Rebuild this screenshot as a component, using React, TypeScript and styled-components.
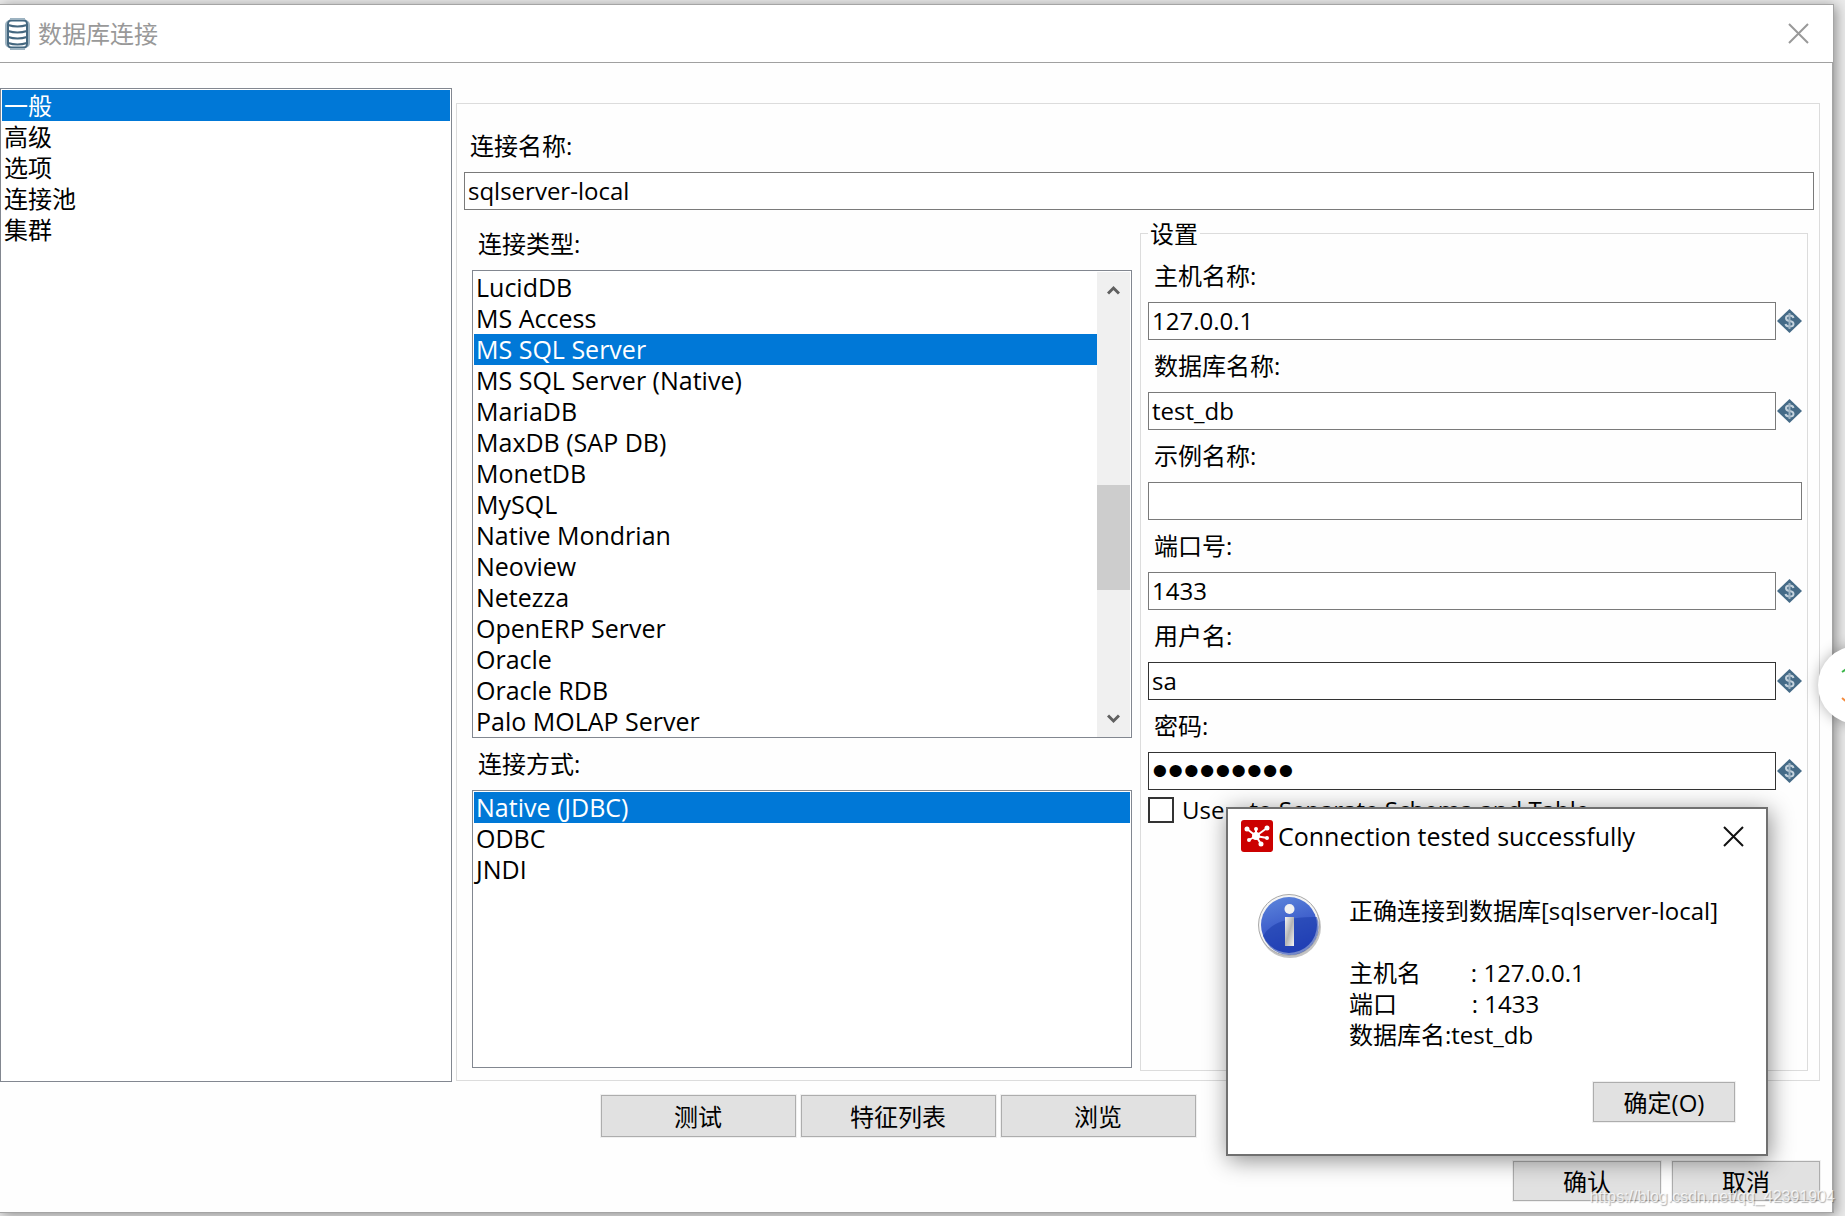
import React, { useState } from "react";
import styled, { createGlobalStyle, css } from "styled-components";

const GlobalStyle = createGlobalStyle`
  * { box-sizing: border-box; }
  body {
    margin: 0;
    background: #ebebeb;
    color: #000;
    font: 24px/31px "Open Sans", "Noto Sans CJK SC", sans-serif;
  }
  button, input { font: inherit; color: inherit; }
`;

const Desktop = styled.div`
  position: relative;
  display: flex;
  min-height: 100vh;
  padding: 4px 11px 3px 0;
  overflow: hidden;
`;

const Window = styled.main`
  flex: 1;
  display: flex;
  flex-direction: column;
  border: 1px solid #a5a5a5;
  border-left: 0;
  background: #fefefe;
  box-shadow: 2px 2px 12px rgba(0, 0, 0, 0.4);
`;

const TitleBar = styled.header`
  display: flex;
  align-items: center;
  height: 58px;
  padding: 0 24px 0 5px;
  border-bottom: 1px solid #a0a0a0;
  background: #fff;
  color: #999;
`;

const WindowTitle = styled.h1`
  flex: 1;
  margin: 0 0 0 8px;
  font: inherit;
`;

const CloseButton = styled.button`
  display: flex;
  padding: 0;
  border: 0;
  background: none;
`;

const Content = styled.div`
  flex: 1;
  display: flex;
  flex-direction: column;
  padding: 25px 12px 11px 0;
  border-right: 1px solid #a5a5a5;
`;

const Columns = styled.div`
  flex: 1;
  display: flex;
  gap: 4px;
`;

const ListBox = styled.ul`
  display: flex;
  flex-direction: column;
  margin: 0;
  padding: 1px;
  border: 1px solid #828790;
  list-style: none;
  background: #fff;
`;

const CategoryList = styled(ListBox)`
  width: 452px;
`;

const MethodList = styled(ListBox)`
  flex: 1;
  font-size: 25px;
`;

const Option = styled.li<{ $selected?: boolean }>`
  flex: none;
  height: 31px;
  padding: 0 2px;
  white-space: nowrap;
  cursor: default;
  ${(p) =>
    p.$selected &&
    css`
      background: #0078d7;
      color: #fff;
    `}
`;

const TypeFrame = styled.div`
  display: flex;
  height: 468px;
  margin-bottom: 7px;
  padding: 1px 1px 0;
  border: 1px solid #828790;
  background: #fff;
`;

const TypeList = styled.ul`
  flex: 1;
  margin: 0;
  padding: 0;
  list-style: none;
  font-size: 25px;
`;

const ScrollBar = styled.div`
  display: flex;
  flex-direction: column;
  width: 33px;
  background: #f0f0f0;
`;

const ScrollButton = styled.button`
  display: flex;
  align-items: center;
  justify-content: center;
  height: 36px;
  padding: 0;
  border: 0;
  background: none;
`;

const ScrollTrack = styled.div`
  flex: 1;
  padding-top: 177px;
`;

const ScrollThumb = styled.div`
  height: 105px;
  background: #cdcdcd;
`;

const Panel = styled.section`
  flex: 1;
  display: flex;
  flex-direction: column;
  margin: 15px 0 1px;
  padding: 23px 5px 9px 7px;
  border: 1px solid #dcdcdc;
`;

const FieldLabel = styled.label`
  display: block;
  padding: 3px 6px 11px;
`;

const TextBox = styled.input<{ $strong?: boolean }>`
  flex: 1;
  display: block;
  width: 100%;
  min-width: 0;
  height: 38px;
  padding: 0 3px 2px;
  border: 1px solid ${(p) => (p.$strong ? "#333" : "#7a7a7a")};
  border-radius: 0;
  outline: 0;
  background: #fff;

  &[type="password"] {
    padding-bottom: 0;
    font: 45px/36px "Liberation Sans", sans-serif;
  }
`;

const NameBox = styled(TextBox)`
  flex: none;
`;

const PanelColumns = styled.div`
  flex: 1;
  display: grid;
  grid-template-columns: minmax(0, 660fr) minmax(0, 668fr);
  gap: 8px;
  padding: 8px 6px 0 8px;
`;

const TypeColumn = styled.div`
  display: flex;
  flex-direction: column;
  padding: 7px 0 3px;
`;

const Settings = styled.fieldset`
  min-width: 0;
  margin: 0;
  padding: 8px 5px 0 7px;
  border: 1px solid #dcdcdc;
`;

const Legend = styled.legend`
  padding: 0 2px;
  height: 31px;
`;

const Field = styled.div`
  height: 90px;
`;

const FieldRow = styled.div`
  display: flex;
  align-items: center;
  gap: 1px;
`;

const CheckRow = styled.label`
  display: flex;
  align-items: center;
  gap: 8px;
  line-height: 26px;
  white-space: nowrap;
`;

const CheckBox = styled.input`
  appearance: none;
  width: 26px;
  height: 26px;
  margin: 0;
  border: 2px solid #333;
  background: #fff;
`;

const Button = styled.button<{ $width: number; $height?: number }>`
  width: ${(p) => p.$width}px;
  height: ${(p) => p.$height ?? 40}px;
  padding: 0;
  border: 1px solid #adadad;
  background: #e1e1e1;
  box-shadow: 0 0 0 1px #f0f0f0;
`;

const ActionBar = styled.div`
  display: flex;
  justify-content: center;
  gap: 5px;
  padding: 13px 24px 0 0;
`;

const FooterBar = styled.footer`
  display: flex;
  justify-content: flex-end;
  gap: 11px;
  padding-top: 24px;
`;

const Dialog = styled.section`
  position: absolute;
  right: 77px;
  top: 807px;
  width: 542px;
  height: 349px;
  display: flex;
  flex-direction: column;
  border: 2px solid #707070;
  background: #fff;
  box-shadow: 2px 4px 22px rgba(0, 0, 0, 0.45);
`;

const DialogHeader = styled.header`
  display: flex;
  align-items: center;
  gap: 5px;
  padding: 11px 22px 0 13px;
`;

const DialogTitle = styled.h2`
  flex: 1;
  margin: 0;
  font: inherit;
  font-size: 25px;
`;

const DialogBody = styled.div`
  flex: 1;
  display: flex;
  gap: 28px;
  padding: 42px 0 0 30px;
`;

const Message = styled.p`
  margin: 0;
  padding-top: 1px;
  white-space: pre;
`;

const DialogFooter = styled.footer`
  display: flex;
  justify-content: flex-end;
  padding: 0 31px 32px;
`;

const FloatingBall = styled.aside`
  position: absolute;
  left: calc(100% - 27px);
  top: 646px;
  width: 78px;
  height: 78px;
  border-radius: 50%;
  background: #fff;
  box-shadow: 0 0 14px rgba(0, 0, 0, 0.3);
`;

const Watermark = styled.span`
  position: absolute;
  right: 10px;
  bottom: 5px;
  color: rgba(255, 255, 255, 0.75);
  font: 16px/28px "Liberation Sans", sans-serif;
  text-shadow: 1px 1px 1px rgba(0, 0, 0, 0.3);
  pointer-events: none;
`;

const DatabaseIcon = () => (
  <svg width="25" height="34" viewBox="0 0 25 34" fill="none" stroke="#44677f" strokeWidth="2">
    <rect x="1" y="4" width="23" height="26" rx="4" stroke="#9db3c1" />
    <rect x="3" y="3" width="19" height="28" rx="4" />
    <path d="M5 2H20M5 32H20" stroke="#9db3c1" />
    <path d="M3 8Q12.500 11 22 8M3 14Q12.500 17 22 14M3 20Q12.500 23 22 20M3 26Q12.500 29 22 26" />
  </svg>
);

const CloseIcon = ({ color }: { color: string }) => (
  <svg width="21" height="21" viewBox="0 0 21 21" stroke={color} strokeWidth="2">
    <path d="M1 1L20 20M20 1L1 20" />
  </svg>
);

const Chevron = ({ down }: { down?: boolean }) => (
  <svg width="13" height="10" viewBox="0 0 13 10" fill="none" stroke="#606060" strokeWidth="3">
    <path d={down ? "M1 1.500L6.500 7L12 1.500" : "M1 8.500L6.500 3L12 8.500"} />
  </svg>
);

const VariableIcon = () => (
  <svg width="25" height="24" viewBox="0 0 25 24">
    <path d="M12.500 0L25 12L12.500 24L0 12Z" fill="#456b87" />
    <path
      d="M16.500 9Q16 6.500 12.500 6.500Q9 6.500 9 9Q9 11.500 12.500 12Q16.500 12.500 16.500 15Q16.500 17.500 12.500 17.500Q9 17.500 8.500 15"
      fill="none"
      stroke="#c3d1dc"
      strokeWidth="2"
    />
    <path d="M12.500 4V20" stroke="#9db3c3" strokeWidth="2" />
  </svg>
);

const PentahoIcon = () => (
  <svg width="32" height="32" viewBox="0 0 32 32">
    <rect width="32" height="32" rx="3" fill="#c00" />
    <g stroke="#fff" strokeWidth="2" fill="#fff">
      <path d="M15 16L6 9M15 16L15 9M15 16L26 8M15 16L26 18M15 16L20 24M15 16L8 20" />
      <circle cx="15" cy="16" r="3" />
      <circle cx="6" cy="9" r="1.500" />
      <circle cx="15" cy="9" r="1" />
      <circle cx="26" cy="8" r="1.500" />
      <circle cx="26" cy="18" r="1" />
      <circle cx="20" cy="24" r="1.500" />
      <circle cx="8" cy="20" r="1" />
    </g>
  </svg>
);

const InfoIcon = () => (
  <svg width="63" height="65" viewBox="0 0 63 65">
    <defs>
      <linearGradient id="ball" x1="0" y1="0" x2="0.3" y2="1">
        <stop offset="0" stopColor="#5f88dc" />
        <stop offset="1" stopColor="#2742c0" />
      </linearGradient>
      <linearGradient id="stem" x1="0" y1="0" x2="1" y2="1">
        <stop offset="0" stopColor="#f4f4f4" />
        <stop offset="0.5" stopColor="#b4b4b4" />
        <stop offset="1" stopColor="#f4f4f4" />
      </linearGradient>
    </defs>
    <circle cx="32" cy="33" r="31" fill="#c4c4c4" />
    <circle cx="31" cy="31" r="30.500" fill="#f4f4f4" stroke="#a9a9a9" />
    <circle cx="31" cy="31" r="28" fill="url(#ball)" />
    <path d="M5 42Q16 22 59 23A28 28 0 0 1 5 42Z" fill="#1e3fae" opacity="0.6" />
    <circle cx="31.500" cy="15" r="5" fill="#f2f2f2" />
    <rect x="27" y="23" width="9" height="29" fill="url(#stem)" />
  </svg>
);

const categories = ["一般", "高级", "选项", "连接池", "集群"];

const databaseTypes = [
  "LucidDB",
  "MS Access",
  "MS SQL Server",
  "MS SQL Server (Native)",
  "MariaDB",
  "MaxDB (SAP DB)",
  "MonetDB",
  "MySQL",
  "Native Mondrian",
  "Neoview",
  "Netezza",
  "OpenERP Server",
  "Oracle",
  "Oracle RDB",
  "Palo MOLAP Server",
];

const accessMethods = ["Native (JDBC)", "ODBC", "JNDI"];

interface Setting {
  id: string;
  label: string;
  value: string;
  type?: string;
  variable: boolean;
  strong?: boolean;
}

const settings: Setting[] = [
  { id: "host", label: "主机名称:", value: "127.0.0.1", variable: true },
  { id: "database", label: "数据库名称:", value: "test_db", variable: true },
  { id: "instance", label: "示例名称:", value: "", variable: false },
  { id: "port", label: "端口号:", value: "1433", variable: true },
  { id: "user", label: "用户名:", value: "sa", variable: true, strong: true },
  { id: "password", label: "密码:", value: "123456789", type: "password", variable: true, strong: true },
];

interface OptionsProps {
  items: string[];
  selected: string;
  onSelect: (item: string) => void;
}

const Options = ({ items, selected, onSelect }: OptionsProps) => (
  <>
    {items.map((item) => (
      <Option
        key={item}
        role="option"
        aria-selected={item === selected}
        $selected={item === selected}
        onClick={() => onSelect(item)}
      >
        {item}
      </Option>
    ))}
  </>
);

export default function App() {
  const [category, setCategory] = useState("一般");
  const [dbType, setDbType] = useState("MS SQL Server");
  const [method, setMethod] = useState("Native (JDBC)");

  return (
    <Desktop>
      <GlobalStyle />
      <Window>
        <TitleBar>
          <DatabaseIcon />
          <WindowTitle>数据库连接</WindowTitle>
          <CloseButton aria-label="关闭">
            <CloseIcon color="#999" />
          </CloseButton>
        </TitleBar>
        <Content>
          <Columns>
            <CategoryList role="listbox">
              <Options items={categories} selected={category} onSelect={setCategory} />
            </CategoryList>
            <Panel>
              <FieldLabel htmlFor="name">连接名称:</FieldLabel>
              <NameBox id="name" defaultValue="sqlserver-local" />
              <PanelColumns>
                <TypeColumn>
                  <FieldLabel as="div" id="type-label">连接类型:</FieldLabel>
                  <TypeFrame>
                    <TypeList role="listbox" aria-labelledby="type-label">
                      <Options items={databaseTypes} selected={dbType} onSelect={setDbType} />
                    </TypeList>
                    <ScrollBar>
                      <ScrollButton aria-label="向上">
                        <Chevron />
                      </ScrollButton>
                      <ScrollTrack>
                        <ScrollThumb />
                      </ScrollTrack>
                      <ScrollButton aria-label="向下">
                        <Chevron down />
                      </ScrollButton>
                    </ScrollBar>
                  </TypeFrame>
                  <FieldLabel as="div" id="method-label">连接方式:</FieldLabel>
                  <MethodList role="listbox" aria-labelledby="method-label">
                    <Options items={accessMethods} selected={method} onSelect={setMethod} />
                  </MethodList>
                </TypeColumn>
                <Settings>
                  <Legend>设置</Legend>
                  {settings.map((s) => (
                    <Field key={s.id}>
                      <FieldLabel htmlFor={s.id}>{s.label}</FieldLabel>
                      <FieldRow>
                        <TextBox
                          id={s.id}
                          type={s.type ?? "text"}
                          defaultValue={s.value}
                          $strong={s.strong}
                        />
                        {s.variable && <VariableIcon />}
                      </FieldRow>
                    </Field>
                  ))}
                  <CheckRow>
                    <CheckBox type="checkbox" />
                    Use .. to Separate Schema and Table
                  </CheckRow>
                </Settings>
              </PanelColumns>
            </Panel>
          </Columns>
          <ActionBar>
            <Button $width={195} $height={42}>测试</Button>
            <Button $width={195} $height={42}>特征列表</Button>
            <Button $width={195} $height={42}>浏览</Button>
          </ActionBar>
          <FooterBar>
            <Button $width={148}>确认</Button>
            <Button $width={148}>取消</Button>
          </FooterBar>
        </Content>
      </Window>
      <Dialog role="dialog" aria-labelledby="result-title">
        <DialogHeader>
          <PentahoIcon />
          <DialogTitle id="result-title">Connection tested successfully</DialogTitle>
          <CloseButton aria-label="关闭">
            <CloseIcon color="#111" />
          </CloseButton>
        </DialogHeader>
        <DialogBody>
          <InfoIcon />
          <Message>
            {"正确连接到数据库[sqlserver-local]\n\n主机名        : 127.0.0.1\n端口            : 1433\n数据库名:test_db"}
          </Message>
        </DialogBody>
        <DialogFooter>
          <Button $width={142}>确定(O)</Button>
        </DialogFooter>
      </Dialog>
      <FloatingBall>
        <svg width="78" height="78" viewBox="0 0 78 78" fill="none" strokeWidth="2">
          <path d="M24 26L30 22" stroke="#3cb54a" />
          <path d="M24 52L30 57" stroke="#f58a3c" />
        </svg>
      </FloatingBall>
      <Watermark>https://blog.csdn.net/qq_42391904</Watermark>
    </Desktop>
  );
}
